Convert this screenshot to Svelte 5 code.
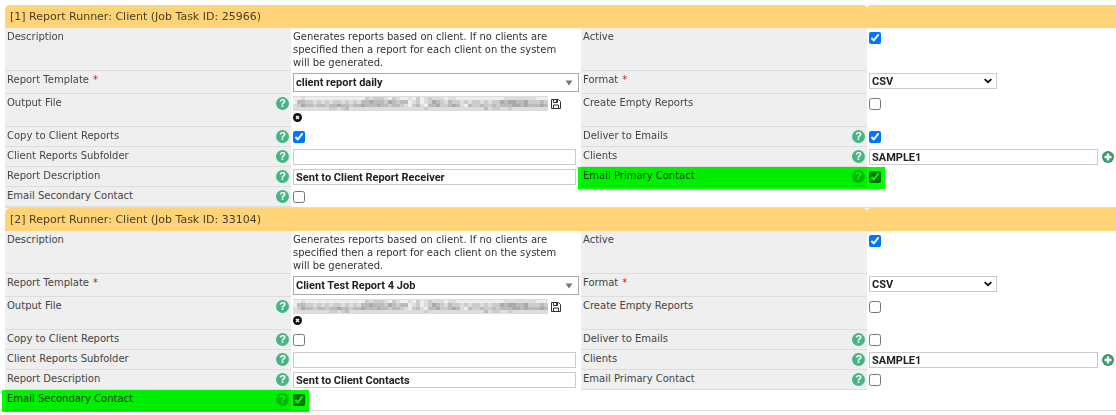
<script>
  let tasks = $state([
    {
      number: 1,
      id: 25966,
      template: 'client report daily',
      active: true,
      format: 'CSV',
      copyToClient: true,
      subfolder: '',
      reportDescription: 'Sent to Client Report Receiver',
      emailSecondary: false,
      createEmpty: false,
      deliver: true,
      clients: 'SAMPLE1',
      emailPrimary: true
    },
    {
      number: 2,
      id: 33104,
      template: 'Client Test Report 4 Job',
      active: true,
      format: 'CSV',
      copyToClient: false,
      subfolder: '',
      reportDescription: 'Sent to Client Contacts',
      emailSecondary: true,
      createEmpty: false,
      deliver: false,
      clients: 'SAMPLE1',
      emailPrimary: false
    }
  ]);

  const templates = ['client report daily', 'Client Test Report 4 Job'];
  const formats = ['CSV', 'PDF', 'XLS'];

  // grey levels for the hidden path, one hex digit per block
  const mask = [
    'eedeeeeeeeeeeeeeeecdcccdecdeedecedcdddeddeeeeeeeeeeeeddddddddeee',
    'ebbccdcdcdccdcdcdbbabbbcabcbbedcedcabcdbccdcdccdcdccabaabbacccbc',
    'dcabbcbbcbbabbcbbabbbabbcbbcdecbdebbaccbabdebccbccbcbbbaababbbab',
    'dddddddddccdcbdddddddddddddddddddcddddddddddddddbdccddcddddddddd'
  ];
</script>

{#snippet label(text, target, opts = {})}
  <div class="label">
    <label for={target}>{text}{#if opts.required}<span class="required">*</span>{/if}</label>
    {#if opts.help}
      <button type="button" class="icon" aria-label="Help: {text}">
        <svg class="help" viewBox="0 0 13 13">
          <circle cx="6.5" cy="6.5" r="6.5" fill="#45b585" />
          <text x="6.5" y="10.3" text-anchor="middle">?</text>
        </svg>
      </button>
    {/if}
    {#if opts.marked}
      <span class="marker"></span>
    {/if}
  </div>
{/snippet}

<main>
  {#each tasks as task (task.id)}
    <section>
      <header class="columns">
        <h2>[{task.number}] Report Runner: Client (Job Task ID: {task.id})</h2>
        <div class="cap"></div>
      </header>

      <div class="columns">
        <div class="label">Description</div>
        <div class="value">
          <p>Generates reports based on client. If no clients are specified then a report for each client on the system will be generated.</p>
        </div>
        {@render label('Active', `active-${task.id}`)}
        <div class="value">
          <input type="checkbox" id="active-{task.id}" bind:checked={task.active} />
        </div>

        {@render label('Report Template', `template-${task.id}`, { required: true })}
        <div class="value">
          <div class="select combo">
            <select id="template-{task.id}" bind:value={task.template}>
              {#each templates as name}
                <option>{name}</option>
              {/each}
            </select>
            <svg viewBox="0 0 8 6"><path d="M0.5 0.5h7L4 5.5z" fill="#777" /></svg>
          </div>
        </div>
        {@render label('Format', `format-${task.id}`, { required: true })}
        <div class="value">
          <div class="select format">
            <select id="format-{task.id}" bind:value={task.format}>
              {#each formats as name}
                <option>{name}</option>
              {/each}
            </select>
            <svg viewBox="0 0 8 6"><path d="M0.6 1.2L4 4.2L7.4 1.2" fill="none" stroke="#111" stroke-width="1.8" /></svg>
          </div>
        </div>

        {@render label('Output File', `output-${task.id}`, { help: true })}
        <div class="value file">
          <div class="line">
            <div class="masked">
              <input type="text" id="output-{task.id}" disabled />
              <svg viewBox="0 0 256 12" preserveAspectRatio="none" shape-rendering="crispEdges">
                {#each mask as row, y}
                  {#each row as level, x}
                    <rect x={x * 4} y={y * 3} width="4" height="3" fill="#{level}{level}{level}" />
                  {/each}
                {/each}
              </svg>
            </div>
            <button type="button" class="icon" aria-label="Save">
              <svg class="save" viewBox="0 0 10 10" fill="none" stroke="#333">
                <path d="M0.5 0.5h7l2 2v7h-9z" />
                <path d="M2.5 0.5v3h4v-3M2.5 9.5v-3.5h5v3.5" />
                <path d="M5.5 1v2" />
              </svg>
            </button>
          </div>
          <button type="button" class="icon" aria-label="Clear">
            <svg class="clear" viewBox="0 0 9 9">
              <circle cx="4.5" cy="4.5" r="4.5" fill="#111" />
              <path d="M3 3l3 3M6 3l-3 3" stroke="#fff" stroke-width="1.4" />
            </svg>
          </button>
        </div>
        {@render label('Create Empty Reports', `empty-${task.id}`)}
        <div class="value">
          <input type="checkbox" id="empty-{task.id}" bind:checked={task.createEmpty} />
        </div>

        {@render label('Copy to Client Reports', `copy-${task.id}`, { help: true })}
        <div class="value">
          <input type="checkbox" id="copy-{task.id}" bind:checked={task.copyToClient} />
        </div>
        {@render label('Deliver to Emails', `deliver-${task.id}`, { help: true })}
        <div class="value">
          <input type="checkbox" id="deliver-{task.id}" bind:checked={task.deliver} />
        </div>

        {@render label('Client Reports Subfolder', `subfolder-${task.id}`, { help: true })}
        <div class="value">
          <input type="text" id="subfolder-{task.id}" bind:value={task.subfolder} />
        </div>
        {@render label('Clients', `clients-${task.id}`, { help: true })}
        <div class="value clients">
          <input type="text" id="clients-{task.id}" bind:value={task.clients} />
          <button type="button" class="icon" aria-label="Add client">
            <svg class="add" viewBox="0 0 12 12">
              <circle cx="6" cy="6" r="6" fill="#3a9a68" />
              <path d="M6 2.5v7M2.5 6h7" stroke="#fff" stroke-width="2.4" />
            </svg>
          </button>
        </div>

        {@render label('Report Description', `description-${task.id}`, { help: true })}
        <div class="value">
          <input type="text" id="description-{task.id}" bind:value={task.reportDescription} />
        </div>
        {@render label('Email Primary Contact', `primary-${task.id}`, { help: true, marked: task.emailPrimary })}
        <div class="value">
          <input type="checkbox" id="primary-{task.id}" bind:checked={task.emailPrimary} />
        </div>

        {@render label('Email Secondary Contact', `secondary-${task.id}`, { help: true, marked: task.emailSecondary })}
        <div class="value">
          <input type="checkbox" id="secondary-{task.id}" bind:checked={task.emailSecondary} />
        </div>
      </div>
    </section>
  {/each}
</main>

<style>
  :global(body) {
    margin: 0;
    background: #fff;
  }

  main {
    padding: 5px 0 4px 5px;
    font-family: Verdana, "DejaVu Sans", sans-serif;
    font-size: 10px;
    line-height: 13px;
    color: #444;
  }

  section {
    border-bottom: 1px solid #ddd;
  }

  .columns {
    display: grid;
    grid-template-columns: 286fr 290fr 286fr 249fr;
  }

  h2,
  .cap {
    min-height: 23px;
    box-sizing: border-box;
    background: #ffd479;
    border-radius: 5px 4px 0 0;
  }

  h2 {
    grid-column: span 3;
    margin: 0;
    padding: 5px;
    font-size: 11px;
    font-weight: normal;
    line-height: 13px;
    color: #4a3d22;
  }

  .cap {
    border-radius: 4px 0 0 0;
  }

  .label {
    position: relative;
    display: flex;
    justify-content: space-between;
    align-items: flex-start;
    min-height: 20px;
    box-sizing: border-box;
    padding: 2px;
    background: #efefef;
    border-bottom: 1px solid #ddd;
  }

  .required {
    margin-left: 4px;
    color: #b22;
  }

  .value {
    padding: 2px;
    min-width: 0;
  }

  p {
    margin: 0;
    padding-right: 12px;
    color: #333;
  }

  .icon {
    display: block;
    flex: none;
    padding: 0;
    border: 0;
    background: none;
    cursor: pointer;
  }

  .icon svg {
    display: block;
  }

  .label .icon {
    padding-top: 1px;
  }

  .help {
    width: 13px;
    height: 13px;
  }

  .help text {
    font: bold 11px "Liberation Sans", Arial, sans-serif;
    fill: #fff;
  }

  .marker {
    position: absolute;
    top: 0;
    left: -3px;
    right: -18px;
    height: 22px;
    background: #0f0;
    mix-blend-mode: multiply;
    pointer-events: none;
  }

  input[type="checkbox"] {
    display: block;
    width: 12px;
    height: 12px;
    margin: 2px 0;
  }

  input[type="text"],
  select {
    display: block;
    width: 100%;
    height: 16px;
    box-sizing: border-box;
    padding: 0 2px;
    border: 1px solid #ccc;
    border-radius: 0;
    background: #fff;
    font: bold 11px Roboto, Arial, sans-serif;
    color: #222;
  }

  .value > input[type="text"] {
    width: calc(100% - 3px);
  }

  .select {
    display: grid;
    align-items: center;
  }

  .select select,
  .select svg {
    grid-area: 1 / 1;
  }

  .select select {
    appearance: none;
  }

  .select svg {
    justify-self: end;
    width: 8px;
    height: 6px;
    margin-right: 6px;
    pointer-events: none;
  }

  .combo select {
    height: 19px;
    border-color: #aaa;
  }

  .format {
    width: 128px;
  }

  .format svg {
    margin-right: 5px;
  }

  .file {
    padding-bottom: 5px;
  }

  .line {
    display: flex;
    align-items: center;
    gap: 3px;
    margin-bottom: 2px;
  }

  .masked {
    display: grid;
    width: 89%;
  }

  .masked input,
  .masked svg {
    grid-area: 1 / 1;
  }

  .masked input[type="text"] {
    height: 15px;
    border-color: #ddd;
    background: #e6e6e6;
  }

  .masked svg {
    width: 100%;
    height: 13px;
    align-self: center;
  }

  .save {
    width: 10px;
    height: 10px;
  }

  .clear {
    width: 9px;
    height: 9px;
  }

  .add {
    width: 12px;
    height: 12px;
  }

  .clients {
    display: flex;
    align-items: center;
    gap: 4px;
  }

  .clients > input[type="text"] {
    flex: 1;
    min-width: 0;
  }
</style>
